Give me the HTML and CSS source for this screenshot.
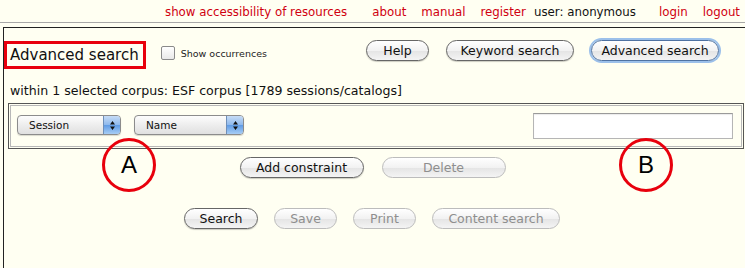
FILE: index.html
```html
<!DOCTYPE html>
<html lang="en">
<head>
    <meta charset="UTF-8">
    <title>Advanced search</title>
    <link rel="stylesheet" href="styles.css">
</head>
<body>
<div class="topbar">
    <a href="#" class="toplink">show accessibility of resources</a>
    <a href="#" class="toplink about">about</a>
    <a href="#" class="toplink">manual</a>
    <a href="#" class="toplink">register</a>
    <span class="user">user: anonymous</span>
    <a href="#" class="toplink login">login</a>
    <a href="#" class="toplink">logout</a>
</div>

<div class="panel">
    <div class="header-row">
        <h1 class="title">Advanced search</h1>
        <label class="occurrences">
            <span class="checkbox"></span>
            Show occurrences
        </label>
        <div class="mode-buttons">
            <button class="btn btn-help">Help</button>
            <button class="btn btn-wide">Keyword search</button>
            <button class="btn btn-wide btn-focus">Advanced search</button>
        </div>
    </div>

    <p class="corpus-info">within 1 selected corpus: ESF corpus [1789 sessions/catalogs]</p>

    <div class="constraint-box">
        <div class="select select-session">
            <span class="select-value">Session</span>
            <span class="select-arrows">
                <svg width="7" height="11" viewBox="0 0 7 11"><path d="M3.5 1 L6 4.5 H1 Z M1 6.5 H6 L3.5 10 Z" fill="#111"/></svg>
            </span>
        </div>
        <div class="select select-name">
            <span class="select-value">Name</span>
            <span class="select-arrows">
                <svg width="7" height="11" viewBox="0 0 7 11"><path d="M3.5 1 L6 4.5 H1 Z M1 6.5 H6 L3.5 10 Z" fill="#111"/></svg>
            </span>
        </div>
        <input type="text" class="value-input">
    </div>

    <div class="button-row constraint-actions">
        <button class="btn btn-mid">Add constraint</button>
        <button class="btn btn-mid" disabled>Delete</button>
    </div>

    <div class="button-row search-actions">
        <button class="btn btn-search">Search</button>
        <button class="btn btn-small" disabled>Save</button>
        <button class="btn btn-small" disabled>Print</button>
        <button class="btn btn-wide" disabled>Content search</button>
    </div>

    <div class="marker marker-a">A</div>
    <div class="marker marker-b">B</div>
</div>
</body>
</html>
```

FILE: styles.css
```css
* {
    box-sizing: border-box;
}
body {
    margin: 0;
    background: #fffff2;
    font-family: "DejaVu Sans", sans-serif;
    color: #111;
}

/* top navigation */
.topbar {
    height: 23px;
    display: flex;
    justify-content: flex-end;
    align-items: center;
    padding: 1px 5px 0 0;
    border-bottom: 1px solid #a8a8a8;
    font-size: 11.8px;
}
.toplink {
    color: #d00010;
    text-decoration: none;
    margin-left: 15px;
}
.toplink.about {
    margin-left: 25px;
}
.toplink.login {
    margin-left: 23px;
}
.user {
    margin-left: 8px;
}

/* main panel */
.panel {
    position: relative;
    margin: 4px 0 0 3px;
    height: 242px;
    border-top: 1px solid #222;
    border-left: 1px solid #222;
    padding-top: 12px;
}
.header-row {
    display: flex;
    align-items: flex-start;
}
.title {
    margin: 1px 0 0 0;
    height: 28px;
    padding: 0 4px 0 3px;
    border: 3px solid #e8000c;
    font-size: 15px;
    font-weight: normal;
    line-height: 22px;
}
.occurrences {
    display: flex;
    align-items: center;
    gap: 6px;
    margin: 6px 0 0 15px;
    font-size: 9.5px;
    color: #222;
}
.checkbox {
    width: 14px;
    height: 14px;
    border: 1px solid #8a8a8a;
    border-radius: 2px;
    background: linear-gradient(#fff, #e9e9e9);
}
.mode-buttons {
    display: flex;
    gap: 17px;
    margin-left: auto;
    margin-right: 26px;
}

.corpus-info {
    margin: 14px 0 0 6px;
    font-size: 12.6px;
    line-height: 15px;
}

/* constraint box */
.constraint-box {
    display: flex;
    align-items: center;
    margin: 5px 1px 0 4px;
    height: 46px;
    padding: 0 10px 0 8px;
    border: 1px solid #555;
    box-shadow: inset 0 0 0 1px #fffff2, inset 0 0 0 2px #b8b8b8;
}
.select {
    display: flex;
    height: 20px;
    border: 1px solid #8c8c8c;
    border-radius: 4px;
    background: linear-gradient(#fdfdfd, #ececec 55%, #e0e0e0);
    overflow: hidden;
    font-size: 10.5px;
    box-shadow: 0 1px 1px rgba(0, 0, 0, 0.15);
}
.select-session {
    width: 104px;
    margin-top: -2px;
}
.select-name {
    width: 110px;
    margin: -2px 0 0 13px;
}
.select-value {
    flex: 1;
    padding-left: 11px;
    line-height: 18px;
}
.select-arrows {
    width: 17px;
    display: flex;
    align-items: center;
    justify-content: center;
    border-left: 1px solid #6f8fb8;
    background: linear-gradient(#c7dcf6, #8db8ec 50%, #5f9be5 51%, #a7cdf5);
}
.value-input {
    margin-left: auto;
    width: 200px;
    height: 26px;
    border: 1px solid #b5b5b5;
    border-top-color: #9a9a9a;
    background: #fff;
    box-shadow: inset 0 1px 1px rgba(0, 0, 0, 0.08);
}

/* buttons */
.btn {
    height: 21px;
    padding: 0;
    border: 1px solid #666;
    border-radius: 11px;
    background: linear-gradient(#ffffff, #f2f2f2 50%, #e4e4e4 51%, #f4f4f4);
    font-family: "DejaVu Sans", sans-serif;
    font-size: 12.5px;
    white-space: nowrap;
    color: #111;
    box-shadow: 0 1px 1px rgba(0, 0, 0, 0.2);
}
.btn:disabled {
    border-color: #bcbcbc;
    color: #8e8e8e;
    box-shadow: none;
}
.btn-help {
    width: 63px;
}
.btn-wide {
    width: 128px;
}
.btn-mid {
    width: 124px;
}
.btn-search {
    width: 74px;
}
.btn-small {
    width: 63px;
}
.btn-focus {
    border-color: #4f72a2;
    box-shadow: 0 0 0 2px #9cc0ea;
}
.button-row {
    display: flex;
    justify-content: center;
}
.constraint-actions {
    gap: 18px;
    margin-top: 8px;
    padding-right: 4px;
}
.search-actions {
    gap: 16px;
    margin-top: 30px;
    padding-right: 5px;
}

/* annotation markers */
.marker {
    position: absolute;
    top: 110px;
    width: 54px;
    height: 54px;
    border: 3px solid #e8000c;
    border-radius: 50%;
    display: flex;
    align-items: center;
    justify-content: center;
    font-family: "Liberation Sans", sans-serif;
    font-size: 24px;
    color: #000;
}
.marker-a {
    left: 98px;
}
.marker-b {
    left: 615px;
}
```
